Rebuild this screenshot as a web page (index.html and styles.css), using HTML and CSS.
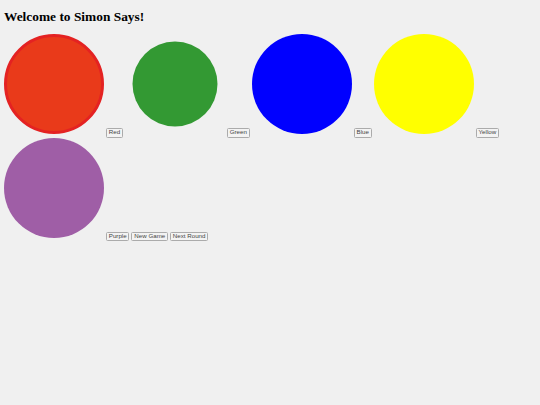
FILE: index.html
```
<!DOCTYPE html>
<html>
<head>
<meta charset="utf-8">
<title>Simon Says</title>
<link rel="stylesheet" href="styles.css">
</head>
<body>
<h2 class="title">Welcome to Simon Says!</h2>
<div class="board">
<div class="pad pad-red active"></div> <button class="btn">Red</button> <div class="pad pad-green pressed"></div> <button class="btn">Green</button> <div class="pad pad-blue"></div> <button class="btn">Blue</button> <div class="pad pad-yellow"></div> <button class="btn">Yellow</button> <div class="pad pad-purple"></div> <button class="btn">Purple</button> <button class="btn">New Game</button> <button class="btn">Next Round</button>
</div>
</body>
</html>
```
FILE: styles.css
```
html, body {
  margin: 0;
  background: #f0f0f0;
}
body {
  padding: 4px;
}
.title {
  font-family: "Liberation Serif", "Times New Roman", serif;
  font-weight: bold;
  font-size: 13.4px;
  line-height: 16px;
  margin: 5px 0 9.25px;
  color: #000;
}
.board {
  font-family: "Liberation Serif", serif;
  font-size: 8px;
  line-height: normal;
}
.pad {
  display: inline-block;
  width: 100px;
  height: 100px;
  border-radius: 50%;
  box-sizing: border-box;
}
.pad-red { background: #e93a1a; }
.pad-red.active { border: 3px solid #e42222; }
.pad-green { background: #339933; }
.pad-green.pressed { transform: scale(0.85); }
.pad-blue { background: #0000ff; }
.pad-yellow { background: #ffff00; }
.pad-purple { background: #9f5ea6; }
.btn {
  font-family: "Liberation Sans", Arial, sans-serif;
  font-size: 6.2px;
  line-height: 5.5px;
  padding: 0 1.8px 1.8px;
  margin: 0;
  border: 1px solid #ababab;
  border-radius: 1.5px;
  background: #f3f3f3;
  color: #444;
}
```
